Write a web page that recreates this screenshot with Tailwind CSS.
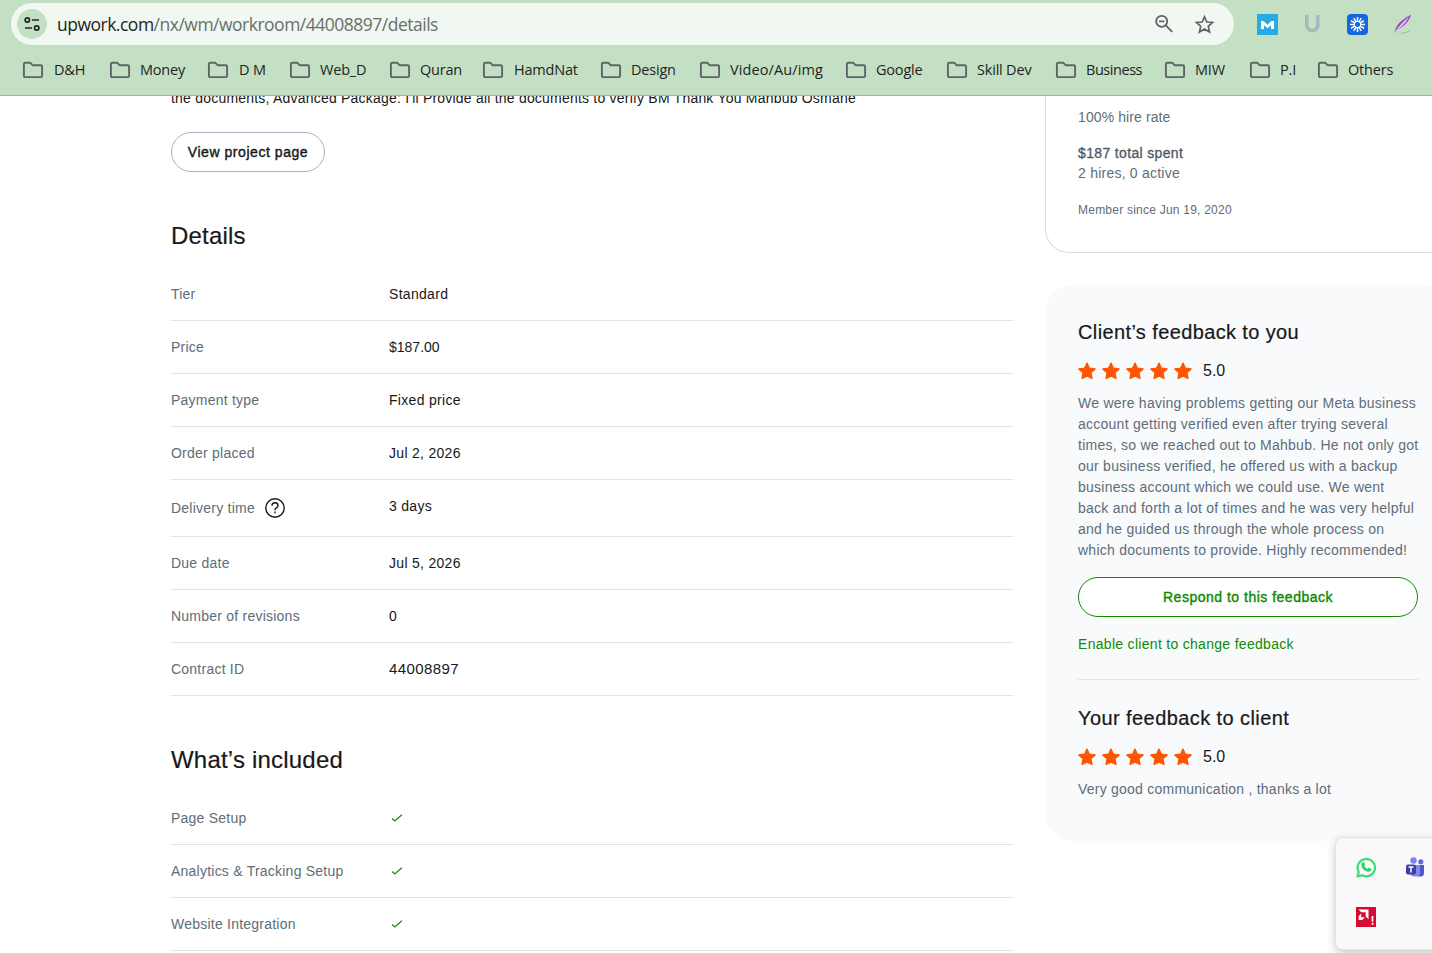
<!DOCTYPE html>
<html lang="en">
	<head>
		<meta charset="UTF-8" />
		<meta name="viewport" content="width=device-width, initial-scale=1.0" />
		<title>Contract details</title>
		<script src="https://cdn.jsdelivr.net/npm/@tailwindcss/browser@4"></script>
	</head>
	<body class="h-screen overflow-hidden bg-white font-['Liberation_Sans',Arial,sans-serif] text-sm leading-5 tracking-[0.23px] text-[#181818]">
		<!-- shared icons -->
		<svg class="hidden">
			<symbol id="folder" viewBox="0 0 22 18">
				<path d="M1.900 3.100q0-1.300 1.300-1.300h5.200l2.400 2.500h8q1.300 0 1.300 1.300v9.200q0 1.300-1.300 1.300H3.200q-1.300 0-1.300-1.300z" fill="none" stroke="#5f6368" stroke-width="1.900" stroke-linejoin="round" />
			</symbol>
			<symbol id="star" viewBox="0 0 18 18">
				<path d="M9 1l2.400 5.200 5.800.7-4.300 3.800 1.100 5.800L9 14.100l-5 2.400 1.100-5.800L.8 6.900l5.800-.7z" fill="#ff5500" stroke="#ff5500" stroke-width="1.300" stroke-linejoin="round" />
			</symbol>
			<symbol id="check" viewBox="0 0 14 14">
				<path d="M2 7.400l2.800 2.500L11.900 3.700" fill="none" stroke="#1f8a0c" stroke-width="1.300" />
			</symbol>
		</svg>

		<!-- browser bar -->
		<header class="h-24 border-b border-[#9db49f] bg-[#c4e0c4] font-['Open_Sans','Noto_Sans',sans-serif] text-[#1f2421]">
			<div class="flex h-12 items-center pl-[11px]">
				<div class="flex h-[42px] w-[1223px] items-center rounded-full bg-[#f0f8f1] pl-1.5">
					<div class="flex size-[30px] items-center justify-center rounded-full bg-[#c4e0c4]">
						<svg class="size-[18px]" viewBox="0 0 18 18" fill="none" stroke="#1f2421" stroke-width="1.7">
							<circle cx="4.3" cy="5" r="2.2" />
							<path d="M9 5h7M2 13h7" />
							<circle cx="13.7" cy="13" r="2.2" />
						</svg>
					</div>
					<div class="ml-2.5 text-[17.5px] leading-6 tracking-[-0.5px]">upwork.com<span class="text-[#6a6f6c]">/nx/wm/workroom/44008897/details</span></div>
					<svg class="mr-[20px] ml-auto size-5" viewBox="0 0 20 20" fill="none" stroke="#5f6368" stroke-width="1.8">
						<circle cx="7.7" cy="7.3" r="5.5" />
						<path d="M11.8 11.4l6.4 6.400M5 7.300h5.400" />
					</svg>
					<svg class="mr-[19px] size-[21px]" viewBox="0 0 20 20" fill="none" stroke="#5f6368" stroke-width="1.6">
						<path d="M10 2.600l2.200 5 5.500.5-4.100 3.600 1.200 5.400-4.800-2.900-4.800 2.900 1.200-5.400-4.100-3.600 5.500-.5z" />
					</svg>
				</div>
				<svg class="ml-[23px] size-[21px]" viewBox="0 0 21 21">
					<path d="M0 0h21v21H0z" fill="#2aaae2" />
					<path d="M4 15V7h2.500l4 3.700 4-3.700H17v8h-3v-3.700l-3.500 3-3.500-3V15z" fill="#fff" />
				</svg>
				<svg class="ml-[26px] h-[18px] w-[17px]" viewBox="0 0 17 18">
					<path d="M2.800 0v10a5.500 5.500 0 0011 0V0" fill="none" stroke="#a7b7bb" stroke-width="3.600" />
				</svg>
				<svg class="ml-[26px] size-[21px]" viewBox="0 0 21 21">
					<rect width="21" height="21" rx="4" fill="#1767dc" />
					<g stroke="#fff" stroke-width="1.5">
						<path id="ray" d="M10.500 3v4.900M10.500 13.100V18M3 10.500h4.900M13.100 10.500H18" />
						<use href="#ray" transform="rotate(30 10.5 10.5)" />
						<use href="#ray" transform="rotate(60 10.5 10.5)" />
					</g>
					<circle cx="10.5" cy="10.5" r="3.300" fill="none" stroke="#fff" stroke-width="1" />
				</svg>
				<svg class="ml-[26px] size-5" viewBox="0 0 20 20">
					<path d="M2 19.500q5-.6 9-1.300 3-.6 5-2-1 3.200-14 3.300z" fill="#94a596" />
					<path d="M.5 18.800Q2 11 8 6.500 13 2.500 17 .8 15.500 6.500 11 10.500 7 14.500 2.500 16z" fill="#9347c0" />
					<path d="M1.500 17.500Q6 10 15 2.500 12.500 8 8.500 11.500 5 15 1.500 17.500z" fill="#e2c4f0" />
				</svg>
			</div>
			<nav class="flex h-11 items-center pl-[22px] text-[14.5px] tracking-[-0.2px] whitespace-nowrap">
				<a class="flex w-[87px] shrink-0 items-center gap-2.5"><svg class="h-[18px] w-[22px]"><use href="#folder" /></svg>D&amp;H</a>
				<a class="flex w-[98px] shrink-0 items-center gap-[9px]"><svg class="h-[18px] w-[22px]"><use href="#folder" /></svg>Money</a>
				<a class="flex w-[82px] shrink-0 items-center gap-2.5"><svg class="h-[18px] w-[22px]"><use href="#folder" /></svg>D M</a>
				<a class="flex w-[100px] shrink-0 items-center gap-[9px]"><svg class="h-[18px] w-[22px]"><use href="#folder" /></svg>Web_D</a>
				<a class="flex w-[93px] shrink-0 items-center gap-[9px]"><svg class="h-[18px] w-[22px]"><use href="#folder" /></svg>Quran</a>
				<a class="flex w-[118px] shrink-0 items-center gap-2.5"><svg class="h-[18px] w-[22px]"><use href="#folder" /></svg>HamdNat</a>
				<a class="flex w-[99px] shrink-0 items-center gap-[9px]"><svg class="h-[18px] w-[22px]"><use href="#folder" /></svg>Design</a>
				<a class="flex w-[146px] shrink-0 items-center gap-[9px] tracking-[0.1px]"><svg class="h-[18px] w-[22px]"><use href="#folder" /></svg>Video/Au/img</a>
				<a class="flex w-[101px] shrink-0 items-center gap-[9px]"><svg class="h-[18px] w-[22px]"><use href="#folder" /></svg>Google</a>
				<a class="flex w-[109px] shrink-0 items-center gap-[9px]"><svg class="h-[18px] w-[22px]"><use href="#folder" /></svg>Skill Dev</a>
				<a class="flex w-[109px] shrink-0 items-center gap-[9px] tracking-[-0.45px]"><svg class="h-[18px] w-[22px]"><use href="#folder" /></svg>Business</a>
				<a class="flex w-[85px] shrink-0 items-center gap-[9px]"><svg class="h-[18px] w-[22px]"><use href="#folder" /></svg>MIW</a>
				<a class="flex w-[68px] shrink-0 items-center gap-[9px]"><svg class="h-[18px] w-[22px]"><use href="#folder" /></svg>P.I</a>
				<a class="flex shrink-0 items-center gap-[9px]"><svg class="h-[18px] w-[22px]"><use href="#folder" /></svg>Others</a>
			</nav>
		</header>

		<main class="flex h-[857px] items-start gap-8 overflow-hidden pl-[171px]">
			<section class="w-[842px] shrink-0">
				<p class="-mt-2 tracking-[0.21px] whitespace-nowrap">the documents, Advanced Package: I'll Provide all the documents to verify BM Thank You Mahbub Osmane</p>
				<button class="mt-6 flex h-10 w-[154px] items-center justify-center rounded-full border border-[#a9b3c1] tracking-[0.55px] whitespace-nowrap [-webkit-text-stroke:0.4px]">View project page</button>

				<h2 class="mt-[50px] text-2xl leading-7 tracking-[0.2px] [-webkit-text-stroke:0.2px]">Details</h2>
				<dl class="mt-[18px]">
					<div class="flex border-b border-[#dfe3ea] py-4"><dt class="w-[218px] text-[#5e6d78]">Tier</dt><dd class="tracking-[0.3px]">Standard</dd></div>
					<div class="flex border-b border-[#dfe3ea] py-4"><dt class="w-[218px] text-[#5e6d78]">Price</dt><dd class="tracking-normal">$187.00</dd></div>
					<div class="flex border-b border-[#dfe3ea] py-4"><dt class="w-[218px] text-[#5e6d78]">Payment type</dt><dd class="tracking-[0.3px]">Fixed price</dd></div>
					<div class="flex border-b border-[#dfe3ea] py-4"><dt class="w-[218px] text-[#5e6d78]">Order placed</dt><dd class="tracking-[0.3px]">Jul 2, 2026</dd></div>
					<div class="flex border-b border-[#dfe3ea] py-4">
						<dt class="flex h-6 w-[218px] items-center gap-[9px] text-[#5e6d78]">
							Delivery time
							<svg class="size-[22px]" viewBox="0 0 22 22" fill="none" stroke="#181818" stroke-width="1.4">
								<circle cx="11" cy="11" r="9.2" />
								<path d="M8 8.800q0-3 3-3t3 2.700q0 1.500-1.600 2.300-1.400.8-1.400 2.400" />
								<path d="M11 14.600v1.600" />
							</svg>
						</dt>
						<dd class="tracking-[0.3px]">3 days</dd>
					</div>
					<div class="flex border-b border-[#dfe3ea] py-4"><dt class="w-[218px] text-[#5e6d78]">Due date</dt><dd class="tracking-[0.3px]">Jul 5, 2026</dd></div>
					<div class="flex border-b border-[#dfe3ea] py-4"><dt class="w-[218px] text-[#5e6d78]">Number of revisions</dt><dd>0</dd></div>
					<div class="flex border-b border-[#dfe3ea] py-4"><dt class="w-[218px] text-[#5e6d78]">Contract ID</dt><dd class="text-[15px] tracking-[0.4px]">44008897</dd></div>
				</dl>

				<h2 class="mt-[50px] text-2xl leading-7 tracking-[0.2px] [-webkit-text-stroke:0.2px]">What’s included</h2>
				<dl class="mt-[18px]">
					<div class="flex items-center border-b border-[#dfe3ea] py-4"><dt class="w-[219px] text-[#5e6d78]">Page Setup</dt><dd><svg class="size-3.5"><use href="#check" /></svg></dd></div>
					<div class="flex items-center border-b border-[#dfe3ea] py-4"><dt class="w-[219px] text-[#5e6d78]">Analytics &amp; Tracking Setup</dt><dd><svg class="size-3.5"><use href="#check" /></svg></dd></div>
					<div class="flex items-center border-b border-[#dfe3ea] py-4"><dt class="w-[219px] text-[#5e6d78]">Website Integration</dt><dd><svg class="size-3.5"><use href="#check" /></svg></dd></div>
				</dl>
			</section>

			<aside class="w-[406px] shrink-0 text-[#5e6d78]">
				<div class="h-[157px] rounded-b-3xl border border-t-0 border-[#d5dae5] pt-[11px] pl-8">
					<p class="tracking-[0.1px]">100% hire rate</p>
					<p class="mt-4 tracking-[0.35px] text-[#4c5866] [-webkit-text-stroke:0.3px]">$187 total spent</p>
					<p>2 hires, 0 active</p>
					<p class="mt-[17px] text-xs leading-5">Member since Jun 19, 2020</p>
				</div>

				<div class="mt-8 h-[556px] rounded-[28px] bg-[#f9fafc] pt-[33px] pl-[33px]">
					<h3 class="text-xl leading-7 tracking-[0.38px] text-[#181818] [-webkit-text-stroke:0.2px]">Client’s feedback to you</h3>
					<div class="mt-[13px] flex items-center gap-1.5 text-base leading-6 tracking-normal text-[#181818]">
						<svg class="size-[18px]"><use href="#star" /></svg>
						<svg class="size-[18px]"><use href="#star" /></svg>
						<svg class="size-[18px]"><use href="#star" /></svg>
						<svg class="size-[18px]"><use href="#star" /></svg>
						<svg class="size-[18px]"><use href="#star" /></svg>
						<span class="ml-[5px]">5.0</span>
					</div>
					<p class="mt-2.5 leading-[21px] tracking-[0.25px] whitespace-nowrap">
						We were having problems getting our Meta business<br />
						account getting verified even after trying several<br />
						times, so we reached out to Mahbub. He not only got<br />
						our business verified, he offered us with a backup<br />
						business account which we could use. We went<br />
						back and forth a lot of times and he was very helpful<br />
						and he guided us through the whole process on<br />
						which documents to provide. Highly recommended!
					</p>
					<button class="mt-4 flex h-10 w-[340px] items-center justify-center rounded-full border border-[#108a00] bg-white tracking-[0.5px] text-[#108a00] [-webkit-text-stroke:0.4px]">Respond to this feedback</button>
					<a class="mt-[17px] block tracking-[0.3px] text-[#108a00]">Enable client to change feedback</a>
					<hr class="mt-[25px] w-[340px] border-[#dfe3ea]" />
					<h3 class="mt-6 text-xl leading-7 tracking-[0.42px] text-[#181818] [-webkit-text-stroke:0.2px]">Your feedback to client</h3>
					<div class="mt-[13px] flex items-center gap-1.5 text-base leading-6 tracking-normal text-[#181818]">
						<svg class="size-[18px]"><use href="#star" /></svg>
						<svg class="size-[18px]"><use href="#star" /></svg>
						<svg class="size-[18px]"><use href="#star" /></svg>
						<svg class="size-[18px]"><use href="#star" /></svg>
						<svg class="size-[18px]"><use href="#star" /></svg>
						<span class="ml-[5px]">5.0</span>
					</div>
					<p class="mt-2.5 leading-[21px]">Very good communication , thanks a lot</p>
				</div>
			</aside>
		</main>

		<!-- system tray flyout -->
		<div class="fixed -right-2 bottom-[3px] grid h-[113px] w-[105px] grid-cols-[49px_auto] content-start gap-y-[29px] rounded-lg border border-[#e2e3e4] bg-[#f9f9f9] pt-[19px] pl-5 shadow-[0_3px_10px_rgba(0,0,0,0.22)]">
			<svg class="size-[21px]" viewBox="0 0 21 21">
				<path d="M1.500 19.500l1.200-4.600A8.700 8.700 0 116 18.200z" fill="none" stroke="#3ddc72" stroke-width="2.200" stroke-linejoin="round" />
				<path d="M6.800 5.200q.9-.6 1.400.3l.8 1.900q.1.500-.7 1.400 1 2.200 3.300 3.100.9-1.200 1.300-1.100l2.200 1q.6.500 0 1.500-1 1.700-3 1.500-5.600-1.200-6.800-6.600-.1-2 1.500-3z" fill="#2fd366" />
			</svg>
			<svg class="size-[21px]" viewBox="0 0 21 21">
				<circle cx="8.500" cy="3.500" r="3.200" fill="#7b83eb" />
				<circle cx="15.800" cy="4.800" r="2.600" fill="#5f66d8" />
				<path d="M12 8h7v8q0 3.500-3.500 3.500H12z" fill="#5059cc" />
				<path d="M5 8h10v8q0 3.500-5 3.500T5 15z" fill="#8087ee" />
				<rect x="1" y="7.500" width="10" height="10" rx="2" fill="#3a41ab" />
				<path d="M3.500 10h5M6 10v5.500" stroke="#fff" stroke-width="1.500" />
			</svg>
			<svg class="size-5" viewBox="0 0 20 20">
				<path d="M0 0h20v20H0z" fill="#d90a32" />
				<path d="M2.500 2.500h10v9.700L9.700 9.600V5.300H5.300zM5.200 6.500v3.700h3.600L6.300 13H2.600V9.200z" fill="#fff" />
				<path d="M16.500 9v5.500M16.500 15.800v2" stroke="#fff" stroke-width="1.700" />
			</svg>
		</div>
	</body>
</html>
